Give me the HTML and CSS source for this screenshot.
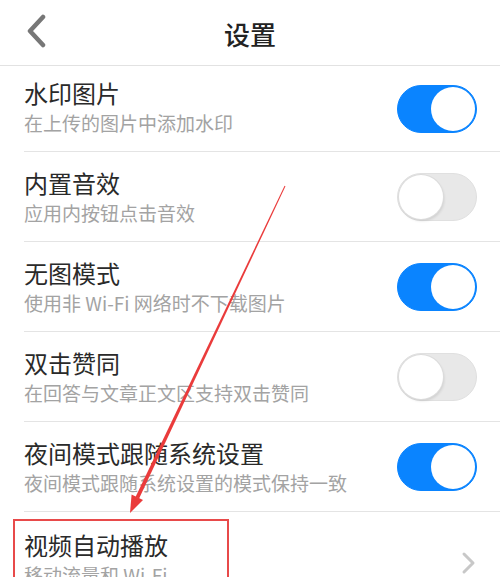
FILE: index.html
```html
<!DOCTYPE html>
<html lang="zh">
<head>
<meta charset="utf-8">
<link rel="stylesheet" href="styles.css">
</head>
<body>
<div class="page">
  <header class="topbar">
    <svg class="back" width="22" height="34" viewBox="0 0 22 34"><path d="M18 3 L5 17 L18 31" fill="none" stroke="#777" stroke-width="4.5" stroke-linecap="round" stroke-linejoin="round"/></svg>
    <h1 class="title">设置</h1>
  </header>
  <ul class="list">
    <li class="row first">
      <div class="texts"><div class="name">水印图片</div><div class="desc">在上传的图片中添加水印</div></div>
      <span class="switch on"><span class="knob"></span></span>
    </li>
    <li class="row">
      <div class="texts"><div class="name">内置音效</div><div class="desc">应用内按钮点击音效</div></div>
      <span class="switch"><span class="knob"></span></span>
    </li>
    <li class="row">
      <div class="texts"><div class="name">无图模式</div><div class="desc">使用非 Wi-Fi 网络时不下载图片</div></div>
      <span class="switch on"><span class="knob"></span></span>
    </li>
    <li class="row">
      <div class="texts"><div class="name">双击赞同</div><div class="desc">在回答与文章正文区支持双击赞同</div></div>
      <span class="switch"><span class="knob"></span></span>
    </li>
    <li class="row">
      <div class="texts"><div class="name">夜间模式跟随系统设置</div><div class="desc">夜间模式跟随系统设置的模式保持一致</div></div>
      <span class="switch on"><span class="knob"></span></span>
    </li>
    <li class="row last">
      <div class="texts"><div class="name">视频自动播放</div><div class="desc">移动流量和 Wi-Fi</div></div>
      <svg class="chev" width="16" height="24" viewBox="0 0 16 24"><path d="M3 3 L12 12 L3 21" fill="none" stroke="#c8c8c8" stroke-width="3" stroke-linecap="round" stroke-linejoin="round"/></svg>
    </li>
  </ul>
  <div class="highlight"></div>
  <svg class="arrow" width="500" height="577" viewBox="0 0 500 577">
    <polygon points="285.45,186.2 284.55,185.8 135.5,496.9 139.1,498.6" fill="#ea3b3b"/>
    <polygon points="130,513 131.6,494.6 143.0,500.0" fill="#ea3b3b"/>
  </svg>
</div>
</body>
</html>
```
FILE: styles.css
```css
* { box-sizing: border-box; }
html, body { margin: 0; padding: 0; background: #fff; }
body {
  font-family: "Noto Sans CJK SC", "Noto Sans", sans-serif;
  width: 500px;
  height: 577px;
  overflow: hidden;
}
.page { position: relative; width: 500px; height: 577px; overflow: hidden; }
.topbar {
  height: 66px;
  border-bottom: 1px solid #e2e2e2;
  display: flex;
  align-items: center;
  justify-content: center;
  position: relative;
}
.back { position: absolute; left: 25px; top: 14px; }
.title {
  margin: 0;
  font-size: 26px;
  font-weight: 500;
  color: #222;
  line-height: 1;
  padding-top: 2px;
}
.list { list-style: none; margin: 0; padding: 0 0 0 24px; }
.row {
  height: 90px;
  display: flex;
  align-items: center;
  justify-content: space-between;
  padding: 0 23px 0 0;
  border-bottom: 1px solid #e4e4e4;
}
.row.first { height: 86px; }
.row.first .texts { margin-top: -4px; }
.row.last { border-bottom: none; align-items: flex-start; }
.texts { display: flex; flex-direction: column; padding-top: 0; }
.name { font-size: 24px; line-height: 30px; color: #2a2a2a; }
.desc { font-size: 19px; line-height: 26px; color: #a3a3a3; margin-top: 2px; }
.row.last .texts { padding-top: 18px; }
.chev { margin-top: 39px; margin-right: 0px; }
.switch {
  width: 80px;
  height: 48px;
  border-radius: 24px;
  background: #e8e8e8;
  border: 1px solid #e0e0e0;
  position: relative;
  flex: none;
}
.switch .knob {
  position: absolute;
  left: 1px;
  top: 1px;
  width: 44px;
  height: 44px;
  border-radius: 50%;
  background: #fff;
  box-shadow: 0 0 0 1px #dcdcdc, 1px 2px 3px rgba(0,0,0,0.12);
}
.switch.on { background: #0a84ff; border-color: #0a84ff; }
.switch.on .knob { left: auto; right: 1px; box-shadow: none; }
.highlight {
  position: absolute;
  left: 13px;
  top: 519px;
  width: 216px;
  height: 80px;
  border: 2px solid #e84a4a;
}
.arrow { position: absolute; left: 0; top: 0; pointer-events: none; }
```
